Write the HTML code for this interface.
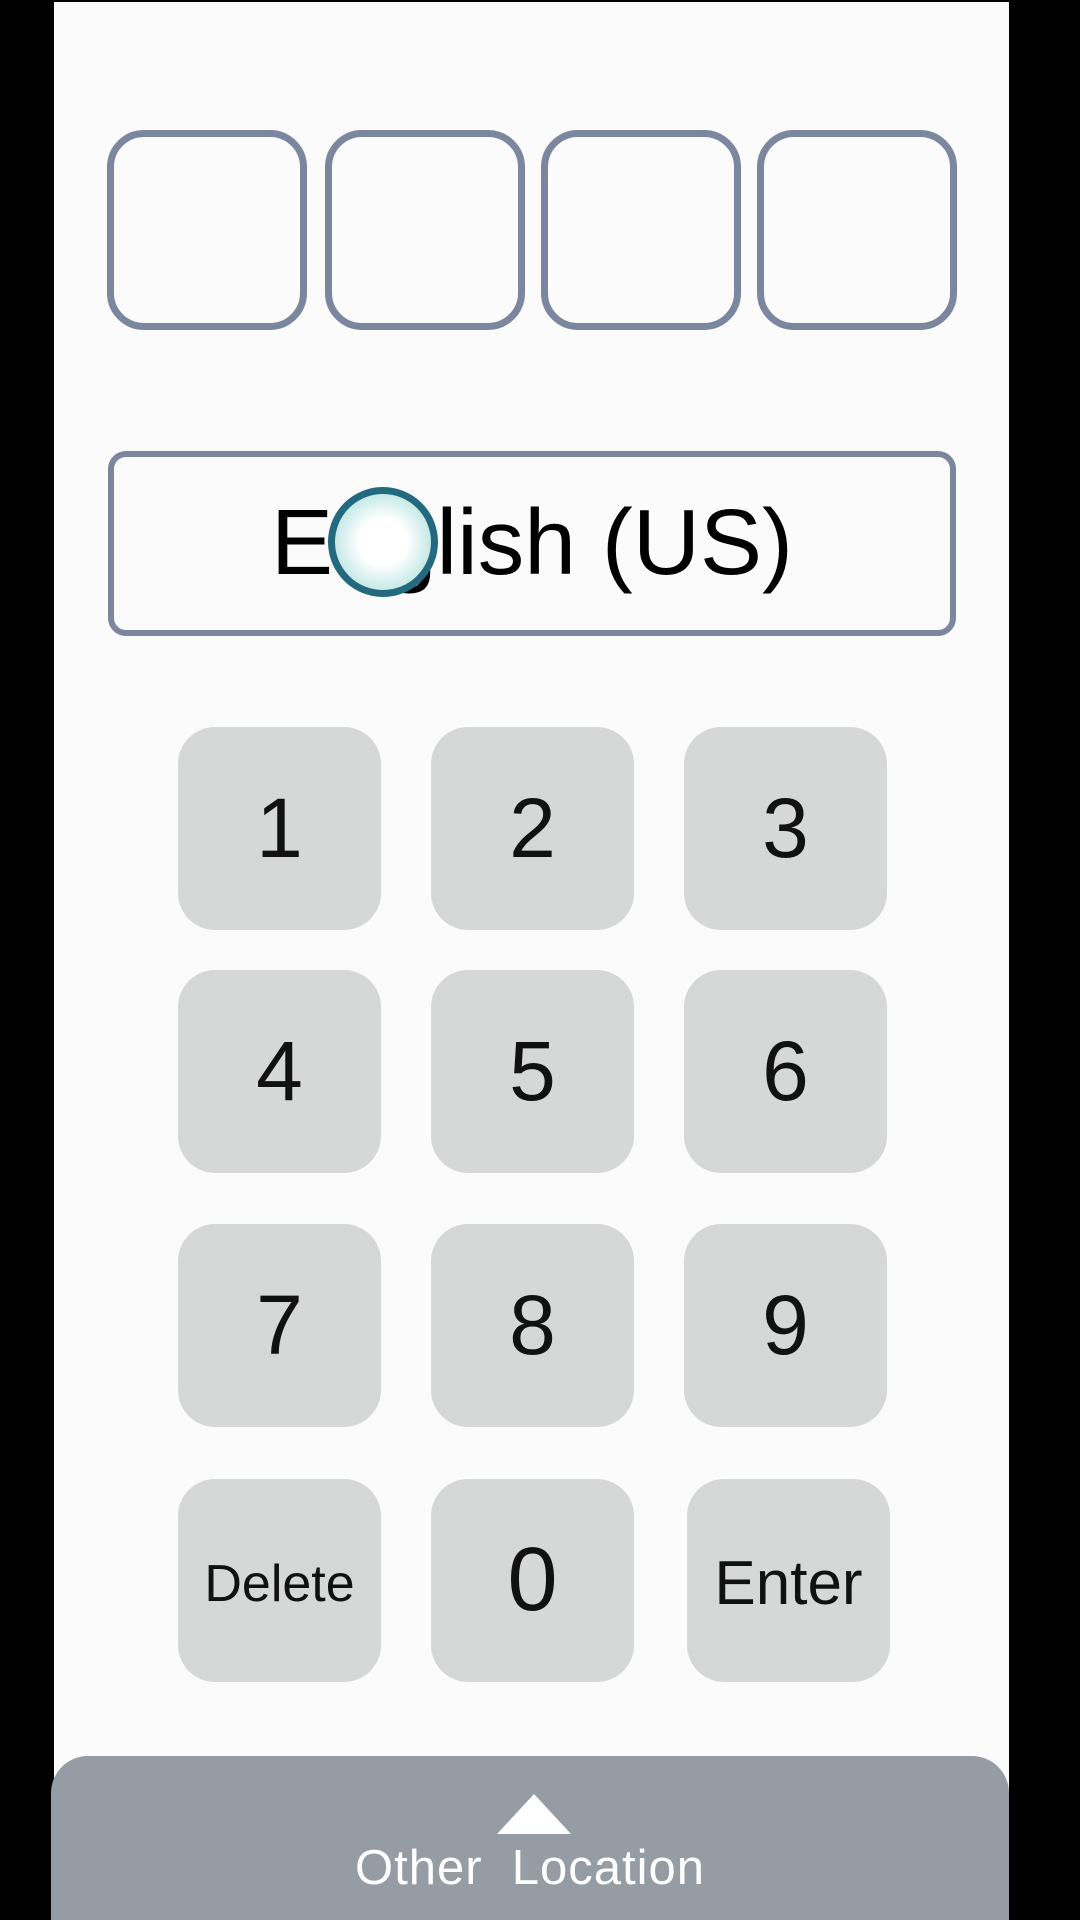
<!DOCTYPE html>
<html><head><meta charset="utf-8"><style>
body{margin:0;width:1080px;height:1920px;background:#000;position:relative;overflow:hidden;font-family:"Liberation Sans",sans-serif}
.page{position:absolute;left:54px;top:2px;width:955px;height:1918px;background:#fbfbfb}
.pin{position:absolute;top:130px;width:186px;height:186px;border:7px solid #7a879e;border-radius:37px;background:#fbfbfb}
.lang{position:absolute;left:108px;top:451px;width:836px;height:173px;border:6px solid #7a879e;border-radius:18px;text-align:center;line-height:170px;font-size:93px;color:#000}
.k{position:absolute;width:203px;height:203px;background:#d6d7d7;border-radius:37px;text-align:center;line-height:203px;font-size:84px;color:#111}
.bar{position:absolute;left:51px;top:1756px;width:958px;height:164px;background:#959ca3;border-radius:37px 37px 0 0;color:#fff;text-align:center}
.dot{position:absolute;left:328px;top:487px;width:96px;height:96px;border-radius:50%;border:7px solid #236a80;background:radial-gradient(circle,#fff 0,#fff 35%,#bfe7e4 75%,#8fd0cc 100%);box-sizing:content-box}
</style></head><body>
<div class="page"></div>
<div class="pin" style="left:107px"></div>
<div class="pin" style="left:325px"></div>
<div class="pin" style="left:541px"></div>
<div class="pin" style="left:757px"></div>
<div class="lang">English (US)</div>
<div class="dot"></div>
<div class="k" style="left:178px;top:727px">1</div>
<div class="k" style="left:431px;top:727px">2</div>
<div class="k" style="left:684px;top:727px">3</div>
<div class="k" style="left:178px;top:970px">4</div>
<div class="k" style="left:431px;top:970px">5</div>
<div class="k" style="left:684px;top:970px">6</div>
<div class="k" style="left:178px;top:1224px">7</div>
<div class="k" style="left:431px;top:1224px">8</div>
<div class="k" style="left:684px;top:1224px">9</div>
<div class="k" style="left:178px;top:1479px;font-size:52px;line-height:210px">Delete</div>
<div class="k" style="left:431px;top:1479px;font-size:90px">0</div>
<div class="k" style="left:687px;top:1479px;font-size:62px;line-height:210px">Enter</div>
<div class="bar">
<svg style="position:absolute;left:446px;top:38px" width="74" height="40"><polygon points="37,0 74,40 0,40" fill="#fff"/></svg>
<div style="position:absolute;left:0;right:0;top:84px;font-size:49px;letter-spacing:1px">Other&nbsp; Location</div>
</div>
</body></html>
